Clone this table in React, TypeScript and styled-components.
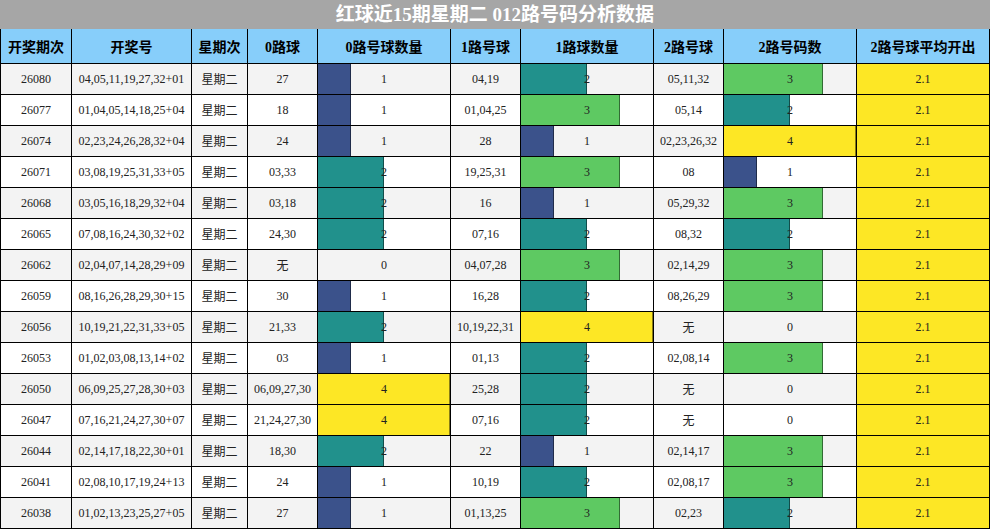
import React from "react";
import styled, { createGlobalStyle } from "styled-components";

// viridis steps for 1..4 balls
const barColors: string[] = ["transparent", "#3b528b", "#21918c", "#5ec962", "#fde725"];
const MAX_COUNT = 4;

type Row = {
  issue: string;
  numbers: string;
  zero: string;
  zeroCount: number;
  one: string;
  oneCount: number;
  two: string;
  twoCount: number;
};

const rows: Row[] = [
  { issue: "26080", numbers: "04,05,11,19,27,32+01", zero: "27", zeroCount: 1, one: "04,19", oneCount: 2, two: "05,11,32", twoCount: 3 },
  { issue: "26077", numbers: "01,04,05,14,18,25+04", zero: "18", zeroCount: 1, one: "01,04,25", oneCount: 3, two: "05,14", twoCount: 2 },
  { issue: "26074", numbers: "02,23,24,26,28,32+04", zero: "24", zeroCount: 1, one: "28", oneCount: 1, two: "02,23,26,32", twoCount: 4 },
  { issue: "26071", numbers: "03,08,19,25,31,33+05", zero: "03,33", zeroCount: 2, one: "19,25,31", oneCount: 3, two: "08", twoCount: 1 },
  { issue: "26068", numbers: "03,05,16,18,29,32+04", zero: "03,18", zeroCount: 2, one: "16", oneCount: 1, two: "05,29,32", twoCount: 3 },
  { issue: "26065", numbers: "07,08,16,24,30,32+02", zero: "24,30", zeroCount: 2, one: "07,16", oneCount: 2, two: "08,32", twoCount: 2 },
  { issue: "26062", numbers: "02,04,07,14,28,29+09", zero: "无", zeroCount: 0, one: "04,07,28", oneCount: 3, two: "02,14,29", twoCount: 3 },
  { issue: "26059", numbers: "08,16,26,28,29,30+15", zero: "30", zeroCount: 1, one: "16,28", oneCount: 2, two: "08,26,29", twoCount: 3 },
  { issue: "26056", numbers: "10,19,21,22,31,33+05", zero: "21,33", zeroCount: 2, one: "10,19,22,31", oneCount: 4, two: "无", twoCount: 0 },
  { issue: "26053", numbers: "01,02,03,08,13,14+02", zero: "03", zeroCount: 1, one: "01,13", oneCount: 2, two: "02,08,14", twoCount: 3 },
  { issue: "26050", numbers: "06,09,25,27,28,30+03", zero: "06,09,27,30", zeroCount: 4, one: "25,28", oneCount: 2, two: "无", twoCount: 0 },
  { issue: "26047", numbers: "07,16,21,24,27,30+07", zero: "21,24,27,30", zeroCount: 4, one: "07,16", oneCount: 2, two: "无", twoCount: 0 },
  { issue: "26044", numbers: "02,14,17,18,22,30+01", zero: "18,30", zeroCount: 2, one: "22", oneCount: 1, two: "02,14,17", twoCount: 3 },
  { issue: "26041", numbers: "02,08,10,17,19,24+13", zero: "24", zeroCount: 1, one: "10,19", oneCount: 2, two: "02,08,17", twoCount: 3 },
  { issue: "26038", numbers: "01,02,13,23,25,27+05", zero: "27", zeroCount: 1, one: "01,13,25", oneCount: 3, two: "02,23", twoCount: 2 },
];

const headers: string[] = [
  "开奖期次",
  "开奖号",
  "星期次",
  "0路球",
  "0路号球数量",
  "1路号球",
  "1路球数量",
  "2路号球",
  "2路号码数",
  "2路号球平均开出",
];

const GlobalStyle = createGlobalStyle`
  body {
    margin: 0;
    background: #fff;
    font-family: "Liberation Serif", "Noto Sans CJK SC", serif;
  }
`;

const Sheet = styled.div`
  width: 990px;
`;

const Title = styled.div`
  height: 29px;
  background: #a6a6a6;
  color: #fff;
  font-weight: bold;
  font-size: 19px;
  line-height: 29px;
  text-align: center;
`;

const Grid = styled.div`
  display: grid;
  grid-template-columns: 70px 119px 55px 69px 132px 69px 132px 69px 132px 132px;
  grid-auto-rows: 30px;
  grid-template-rows: 34px;
  gap: 1px;
  padding: 0 1px 1px 1px;
  background: #000;
`;

const HeadCell = styled.div`
  background: #87cefa;
  color: #000;
  font-weight: bold;
  font-size: 14px;
  display: flex;
  align-items: center;
  justify-content: center;
  white-space: nowrap;
`;

const Cell = styled.div<{ $alt: boolean }>`
  background: ${(p) => (p.$alt ? "#f3f3f3" : "#fff")};
  color: #222;
  font-size: 12px;
  display: flex;
  align-items: center;
  justify-content: center;
  white-space: nowrap;
`;

const BarCell = styled(Cell)<{ $count: number }>`
  background: ${(p) => {
    const base = p.$alt ? "#f3f3f3" : "#fff";
    if (p.$count === 0) return base;
    const pct = (p.$count / MAX_COUNT) * 100;
    const c = barColors[p.$count];
    const end = `calc(${pct}% - 1px)`;
    return `linear-gradient(90deg, ${c} 0, ${c} ${end}, ${c}88 ${end}, ${c}88 ${pct}%, ${base} ${pct}%)`;
  }};
`;

const AvgCell = styled(Cell)`
  background: #fde725;
`;

export default function App() {
  return (
    <Sheet>
      <GlobalStyle />
      <Title>红球近15期星期二 012路号码分析数据</Title>
      <Grid>
        {headers.map((h) => (
          <HeadCell key={h}>{h}</HeadCell>
        ))}
        {rows.map((r, i) => {
          const alt = i % 2 === 0;
          return (
            <React.Fragment key={r.issue}>
              <Cell $alt={alt}>{r.issue}</Cell>
              <Cell $alt={alt}>{r.numbers}</Cell>
              <Cell $alt={alt}>星期二</Cell>
              <Cell $alt={alt}>{r.zero}</Cell>
              <BarCell $alt={alt} $count={r.zeroCount}>{r.zeroCount}</BarCell>
              <Cell $alt={alt}>{r.one}</Cell>
              <BarCell $alt={alt} $count={r.oneCount}>{r.oneCount}</BarCell>
              <Cell $alt={alt}>{r.two}</Cell>
              <BarCell $alt={alt} $count={r.twoCount}>{r.twoCount}</BarCell>
              <AvgCell $alt={alt}>2.1</AvgCell>
            </React.Fragment>
          );
        })}
      </Grid>
    </Sheet>
  );
}
